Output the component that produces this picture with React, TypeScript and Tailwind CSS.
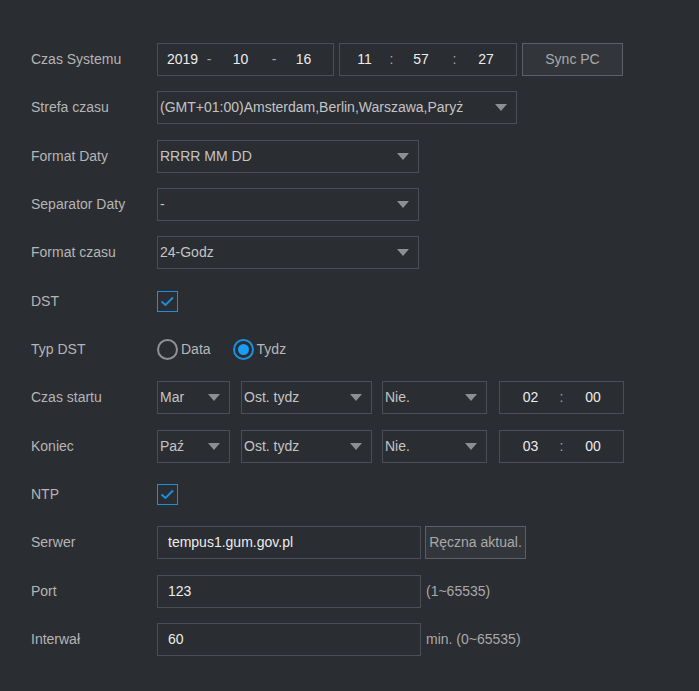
import React from "react";

const font = { fontFamily: '"Liberation Sans", Arial, sans-serif' };

function Caret() {
  return (
    <svg width="12" height="7" viewBox="0 0 12 7" className="shrink-0">
      <polygon points="0,0 12,0 6,7" fill="#8c8f94" />
    </svg>
  );
}

function Select({ value, width }: { value: string; width: string }) {
  return (
    <div className={`${width} h-[33px] border border-[#4a4e55] flex items-center justify-between pl-[2px] pr-[9px] text-[#c4c4c4]`}>
      <span className="whitespace-nowrap">{value}</span>
      <Caret />
    </div>
  );
}

function Check() {
  return (
    <div className="w-[21px] h-[21px] border border-[#1c8fe0] flex items-center justify-center">
      <svg width="17" height="17" viewBox="0 0 17 17">
        <path d="M2.5 8.5 L6.5 12 L14 4.5" fill="none" stroke="#1c8fe0" strokeWidth="2" />
      </svg>
    </div>
  );
}

function Radio({ checked, label }: { checked?: boolean; label: string }) {
  return (
    <div className="flex items-center gap-[3px]">
      <div
        className={`w-[21px] h-[21px] rounded-full border-2 flex items-center justify-center ${
          checked ? "border-[#1c8fe0]" : "border-[#8f9194]"
        }`}
      >
        {checked && <div className="w-[11px] h-[11px] rounded-full bg-[#1c9bf0]" />}
      </div>
      <span className="text-[#b8b8b8]">{label}</span>
    </div>
  );
}

function Row({ label, children }: { label: string; children: React.ReactNode }) {
  return (
    <div className="flex items-center h-[33px]">
      <div className="w-[126px] shrink-0 text-[#b5b5b5] whitespace-nowrap">{label}</div>
      <div className="flex items-center">{children}</div>
    </div>
  );
}

function Cell({ w, children, dim }: { w: string; children: React.ReactNode; dim?: boolean }) {
  return <span className={`${w} text-center ${dim ? "text-[#a8a8a8]" : "text-[#ececec]"}`}>{children}</span>;
}

function TimeBox({ h, m }: { h: string; m: string }) {
  return (
    <div className="ml-[12px] w-[125px] h-[33px] border border-[#4a4e55] flex items-center pl-[5px]">
      <Cell w="w-[51px]">{h}</Cell>
      <Cell w="w-[11px]" dim>:</Cell>
      <Cell w="w-[52px]">{m}</Cell>
    </div>
  );
}

function TextBox({ value }: { value: string }) {
  return (
    <div className="w-[264px] h-[33px] border border-[#4a4e55] flex items-center pl-[10px] text-[#ececec]">
      {value}
    </div>
  );
}

export default function App() {
  return (
    <div className="min-h-[691px] w-full bg-[#2a2d32] text-[14px] pl-[31px] pt-[43px]" style={font}>
      <div className="flex flex-col gap-[15.33px]">
        <Row label="Czas Systemu">
          <div className="w-[177px] h-[33px] border border-[#4a4e55] flex items-center pl-[4px]">
            <Cell w="w-[41px]">2019</Cell>
            <Cell w="w-[12px]" dim>-</Cell>
            <Cell w="w-[51px]">10</Cell>
            <Cell w="w-[16px]" dim>-</Cell>
            <Cell w="w-[43px]">16</Cell>
          </div>
          <div className="ml-[5px] w-[178px] h-[33px] border border-[#4a4e55] flex items-center pl-[4px]">
            <Cell w="w-[41px]">11</Cell>
            <Cell w="w-[13px]" dim>:</Cell>
            <Cell w="w-[46px]">57</Cell>
            <Cell w="w-[21px]" dim>:</Cell>
            <Cell w="w-[42px]">27</Cell>
          </div>
          <button className="ml-[5px] w-[101px] h-[33px] border border-[#5c6066] bg-[#32363b] text-[#a9a9a9]">
            Sync PC
          </button>
        </Row>
        <Row label="Strefa czasu">
          <Select value="(GMT+01:00)Amsterdam,Berlin,Warszawa,Paryż" width="w-[360px]" />
        </Row>
        <Row label="Format Daty">
          <Select value="RRRR MM DD" width="w-[262px]" />
        </Row>
        <Row label="Separator Daty">
          <Select value="-" width="w-[262px]" />
        </Row>
        <Row label="Format czasu">
          <Select value="24-Godz" width="w-[262px]" />
        </Row>
        <Row label="DST">
          <Check />
        </Row>
        <Row label="Typ DST">
          <div className="flex items-center gap-[22px]">
            <Radio label="Data" />
            <Radio label="Tydz" checked />
          </div>
        </Row>
        <Row label="Czas startu">
          <Select value="Mar" width="w-[73px]" />
          <div className="ml-[11px]">
            <Select value="Ost. tydz" width="w-[131px]" />
          </div>
          <div className="ml-[10px]">
            <Select value="Nie." width="w-[105px]" />
          </div>
          <TimeBox h="02" m="00" />
        </Row>
        <Row label="Koniec">
          <Select value="Paź" width="w-[73px]" />
          <div className="ml-[11px]">
            <Select value="Ost. tydz" width="w-[131px]" />
          </div>
          <div className="ml-[10px]">
            <Select value="Nie." width="w-[105px]" />
          </div>
          <TimeBox h="03" m="00" />
        </Row>
        <Row label="NTP">
          <Check />
        </Row>
        <Row label="Serwer">
          <TextBox value="tempus1.gum.gov.pl" />
          <button className="ml-[4px] w-[101px] h-[33px] border border-[#5c6066] bg-[#32363b] text-[#a9a9a9] whitespace-nowrap">
            Ręczna aktual.
          </button>
        </Row>
        <Row label="Port">
          <TextBox value="123" />
          <span className="ml-[5px] text-[#a9a9a9]">(1~65535)</span>
        </Row>
        <Row label="Interwał">
          <TextBox value="60" />
          <span className="ml-[5px] text-[#a9a9a9]">min. (0~65535)</span>
        </Row>
      </div>
    </div>
  );
}
